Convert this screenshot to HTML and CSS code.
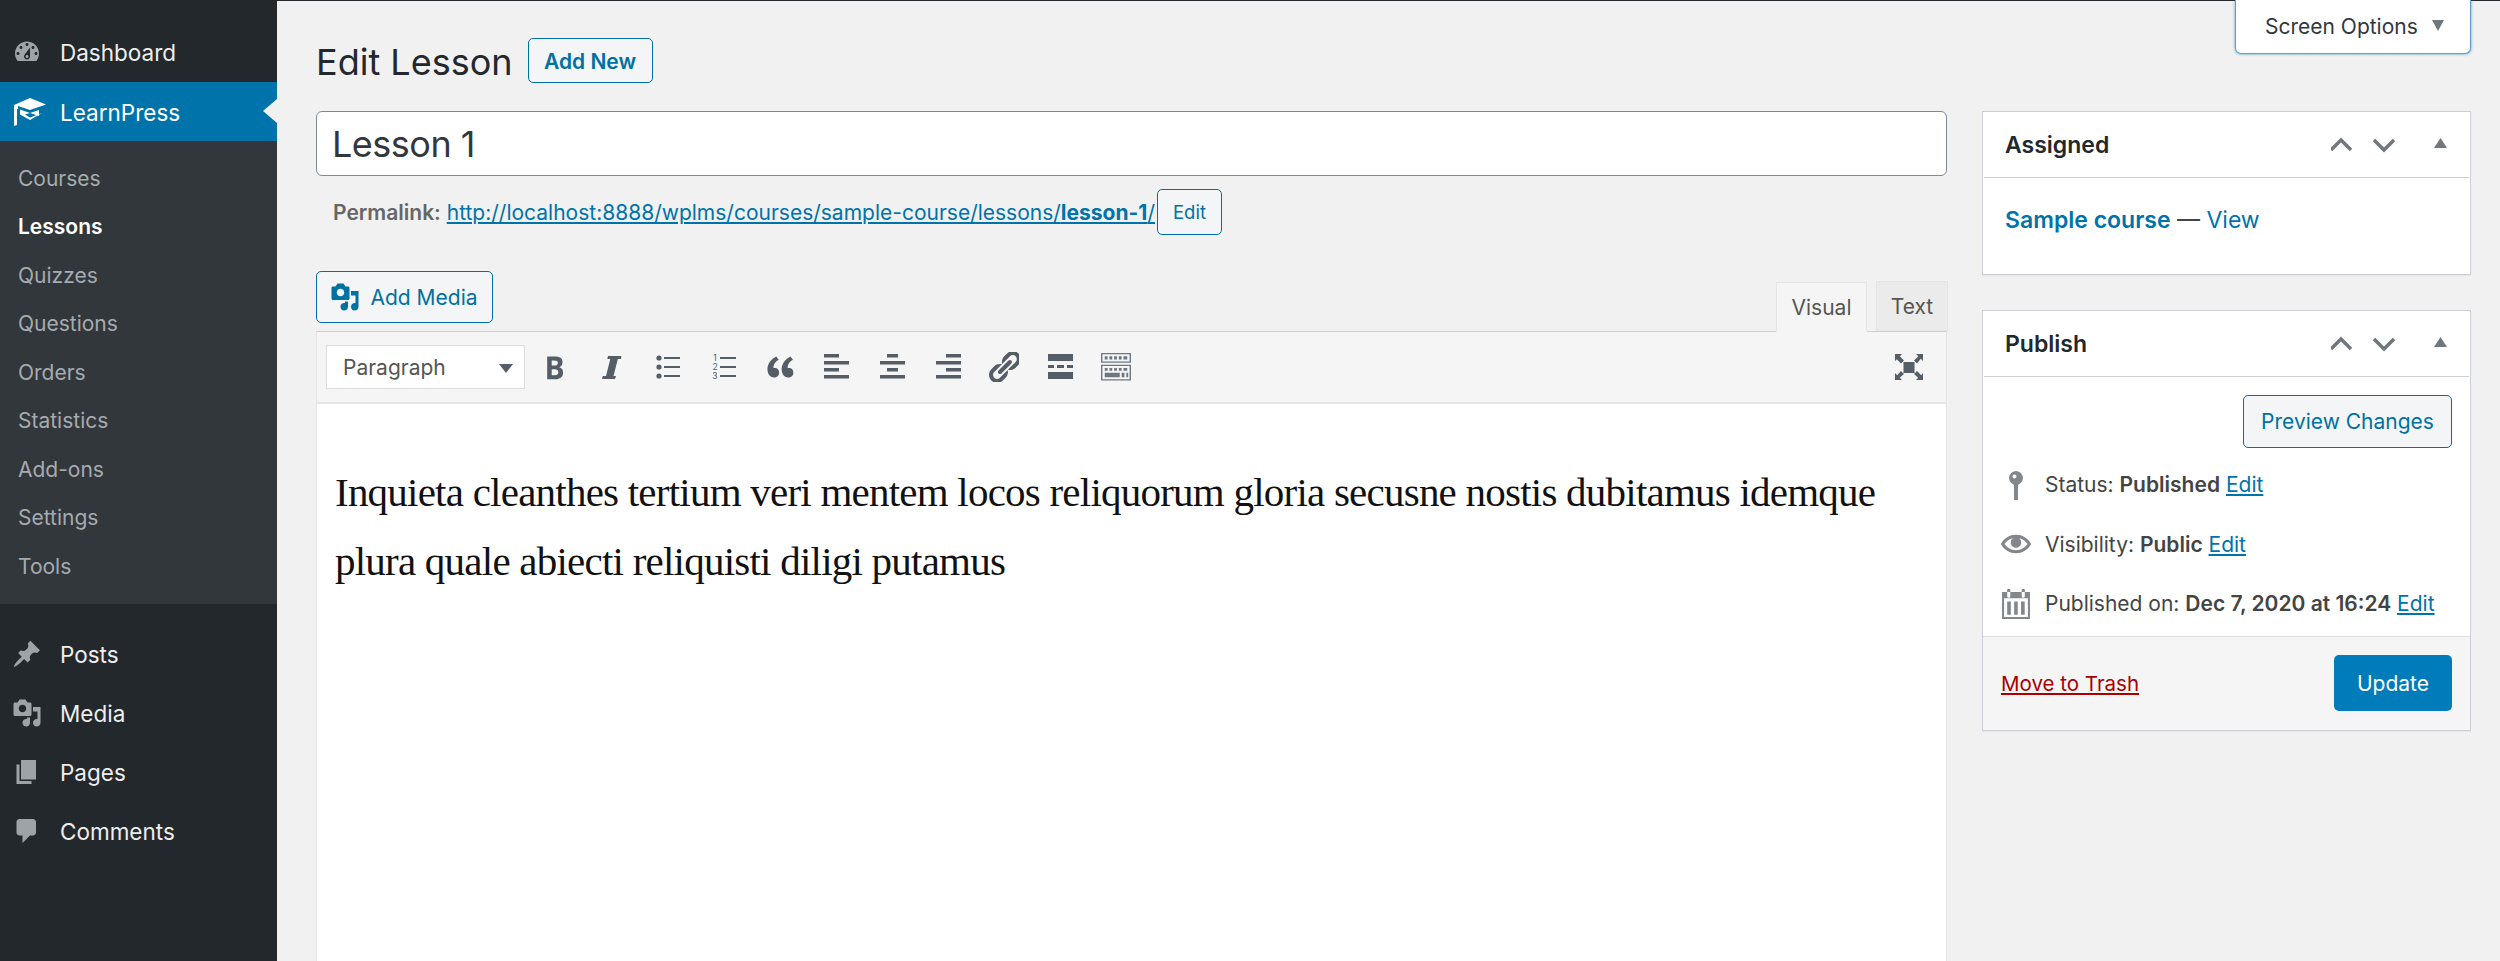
FILE: index.html
```html
<!DOCTYPE html>
<html lang="en">
<head>
<meta charset="utf-8">
<title>Edit Lesson</title>
<link rel="stylesheet" href="styles.css">
</head>
<body>
<aside class="sidebar">
  <nav class="menu">
    <a class="menu-item"><svg class="menu-icon" viewBox="0 0 20 20"><path d="M3.76 16h12.48c1.1-1.37 1.76-3.11 1.76-5 0-4.42-3.58-8-8-8s-8 3.58-8 8c0 1.89.66 3.63 1.76 5zM10 4c.55 0 1 .45 1 1s-.45 1-1 1-1-.45-1-1 .45-1 1-1zM6 6c.55 0 1 .45 1 1s-.45 1-1 1-1-.45-1-1 .45-1 1-1zm8 0c.55 0 1 .45 1 1s-.45 1-1 1-1-.45-1-1 .45-1 1-1zm-5.37 5.55L12 7v6c0 1.1-.9 2-2 2s-2-.9-2-2c0-.57.24-1.08.63-1.45zM4 10c.55 0 1 .45 1 1s-.45 1-1 1-1-.45-1-1 .45-1 1-1zm12 0c.55 0 1 .45 1 1s-.45 1-1 1-1-.45-1-1 .45-1 1-1zm-5 3c0-.55-.45-1-1-1s-1 .45-1 1 .45 1 1 1 1-.45 1-1z"/></svg>Dashboard</a>
    <a class="menu-item current"><svg class="menu-icon cap" viewBox="0 0 34 30"><path d="M18 1 34 7.5 18 13 6 9v3l-1 .5V28l-3 1V8z"/><path d="M8 12.5 18 16l9-3v6l-9-3-5 1.500 5 3 12-4.500-12 7-10-5.500z"/></svg>LearnPress</a>
    <div class="submenu">
      <a class="sub-item">Courses</a>
      <a class="sub-item active">Lessons</a>
      <a class="sub-item">Quizzes</a>
      <a class="sub-item">Questions</a>
      <a class="sub-item">Orders</a>
      <a class="sub-item">Statistics</a>
      <a class="sub-item">Add-ons</a>
      <a class="sub-item">Settings</a>
      <a class="sub-item">Tools</a>
    </div>
    <a class="menu-item sep"><svg class="menu-icon" viewBox="0 0 20 20"><path d="M10.44 3.02l1.82-1.82 6.36 6.35-1.83 1.82c-1.05-.68-2.48-.57-3.41.36l-.75.75c-.92.93-1.04 2.35-.35 3.41l-1.83 1.82-2.41-2.41-2.8 2.79c-.42.42-3.38 2.71-3.8 2.29s1.86-3.39 2.28-3.81l2.79-2.79L4.1 9.36l1.83-1.82c1.05.69 2.48.57 3.4-.36l.75-.75c.93-.92 1.05-2.35.36-3.41z"/></svg>Posts</a>
    <a class="menu-item"><svg class="menu-icon" viewBox="0 0 20 20"><path d="M13 11V4c0-.55-.45-1-1-1h-1.670L9 1H5L3.670 3H2c-.55 0-1 .45-1 1v7c0 .55.45 1 1 1h10c.55 0 1-.45 1-1zM7 4.500c1.380 0 2.500 1.120 2.500 2.500S8.380 9.500 7 9.500 4.500 8.380 4.500 7 5.620 4.500 7 4.500zM14 6h5v10.500c0 1.380-1.120 2.500-2.500 2.500S14 17.880 14 16.500s1.120-2.500 2.500-2.500c.17 0 .34.02.5.05V9h-3V6zm-4 8.050V13h2v3.500c0 1.380-1.120 2.500-2.500 2.500S7 17.880 7 16.500 8.120 14 9.500 14c.17 0 .34.02.5.05z"/></svg>Media</a>
    <a class="menu-item"><svg class="menu-icon" viewBox="0 0 20 20"><path d="M6 15V2h10v13H6zm-1 1h8v2H3V5h2v11z"/></svg>Pages</a>
    <a class="menu-item"><svg class="menu-icon" viewBox="0 0 20 20"><path d="M5 2h9c1.100 0 2 .9 2 2v7c0 1.100-.9 2-2 2h-2l-5 5v-5H5c-1.100 0-2-.9-2-2V4c0-1.100.9-2 2-2z"/></svg>Comments</a>
  </nav>
</aside>

<main class="main">
  <button class="screen-options">Screen Options<span class="tri-down"></span></button>

  <header class="page-head">
    <h1>Edit Lesson</h1>
    <a class="btn add-new">Add New</a>
  </header>

  <div class="columns">
    <section class="content">
      <div class="title-input">Lesson 1</div>
      <div class="permalink"><span><strong>Permalink:</strong> <a class="link" href="#">http://localhost:8888/wplms/courses/sample-course/lessons/<b>lesson-1</b>/</a></span><a class="btn edit-slug">Edit</a></div>

      <div class="media-row">
        <a class="btn add-media"><svg class="media-icon" viewBox="0 0 20 20"><path d="M13 11V4c0-.55-.45-1-1-1h-1.670L9 1H5L3.670 3H2c-.55 0-1 .45-1 1v7c0 .55.45 1 1 1h10c.55 0 1-.45 1-1zM7 4.500c1.380 0 2.500 1.120 2.500 2.500S8.380 9.500 7 9.500 4.500 8.380 4.500 7 5.620 4.500 7 4.500zM14 6h5v10.500c0 1.380-1.120 2.500-2.500 2.500S14 17.880 14 16.500s1.120-2.500 2.500-2.500c.17 0 .34.02.5.05V9h-3V6zm-4 8.050V13h2v3.500c0 1.380-1.120 2.500-2.500 2.500S7 17.880 7 16.500 8.120 14 9.500 14c.17 0 .34.02.5.05z"/></svg>Add Media</a>
        <div class="tabs">
          <span class="tab on">Visual</span>
          <span class="tab">Text</span>
        </div>
      </div>

      <div class="editor">
        <div class="toolbar">
          <div class="format-select">Paragraph<span class="tri-sel"></span></div>
          <span class="tool"><svg viewBox="2.500 1.500 17 17"><path fill-rule="evenodd" d="M6 4v13h4.540c1.370 0 2.460-.33 3.260-1 .8-.66 1.200-1.580 1.200-2.770 0-.84-.17-1.510-.51-2.010s-.9-.85-1.670-1.030v-.09c.57-.1 1.020-.4 1.360-.9s.51-1.130.51-1.910c0-1.140-.39-1.980-1.170-2.500C12.750 4.260 11.500 4 9.780 4H6zm2.570 5.150V6.260h1.360c.73 0 1.270.11 1.610.32.34.22.51.58.51 1.070 0 .54-.16.92-.47 1.150s-.82.35-1.510.35H8.570zm0 2.190h1.600c1.440 0 2.160.53 2.160 1.610 0 .6-.17 1.050-.51 1.340s-.86.43-1.570.43H8.570v-3.380z"/></svg></span>
          <span class="tool"><svg viewBox="0 0 30 30"><path d="M11 4H24.500L23.800 7H20.800L16.500 24H19L18 27H5L5.800 24H9L13.300 7H10.300Z"/></svg></span>
          <span class="tool"><svg viewBox="0 0 30 30"><circle cx="6" cy="6" r="2.600"/><circle cx="6" cy="15" r="2.600"/><circle cx="6" cy="24" r="2.600"/><rect x="11" y="5" width="16" height="2"/><rect x="11" y="14" width="16" height="2"/><rect x="11" y="23" width="16" height="2"/></svg></span>
          <span class="tool"><svg viewBox="0 0 30 30"><text class="ol-num" x="6" y="9">1</text><text class="ol-num" x="6" y="18">2</text><text class="ol-num" x="6" y="27">3</text><rect x="11" y="5" width="16" height="2"/><rect x="11" y="14" width="16" height="2"/><rect x="11" y="23" width="16" height="2"/></svg></span>
          <span class="tool"><svg viewBox="1.500 1.500 17 17"><path d="M9.490 13.220c0-.74-.2-1.380-.61-1.900-.62-.78-1.830-.88-2.530-.72-.29-1.650 1.110-3.750 2.920-4.650L7.880 4c-2.730 1.300-5.420 4.280-4.960 8.050C3.210 14.430 4.590 16 6.540 16c.85 0 1.560-.25 2.120-.75s.83-1.180.83-2.030zm8.050 0c0-.74-.2-1.380-.61-1.900-.63-.78-1.830-.88-2.530-.72-.29-1.650 1.110-3.750 2.920-4.650L15.930 4c-2.730 1.300-5.420 4.280-4.960 8.050.29 2.380 1.660 3.950 3.610 3.950.85 0 1.560-.25 2.120-.75s.84-1.180.84-2.030z"/></svg></span>
          <span class="tool"><svg viewBox="0 0 30 30"><rect x="3" y="2" width="15" height="3.500"/><rect x="3" y="9" width="25" height="3.500"/><rect x="3" y="16" width="15" height="3.500"/><rect x="3" y="23" width="25" height="3.500"/></svg></span>
          <span class="tool"><svg viewBox="0 0 30 30"><rect x="10" y="2" width="11" height="3.500"/><rect x="3" y="9" width="25" height="3.500"/><rect x="10" y="16" width="11" height="3.500"/><rect x="3" y="23" width="25" height="3.500"/></svg></span>
          <span class="tool"><svg viewBox="0 0 30 30"><rect x="13" y="2" width="15" height="3.500"/><rect x="3" y="9" width="25" height="3.500"/><rect x="13" y="16" width="15" height="3.500"/><rect x="3" y="23" width="25" height="3.500"/></svg></span>
          <span class="tool"><svg viewBox="2 2 16 16"><path d="M17.740 2.760c1.680 1.690 1.680 4.410 0 6.100l-1.530 1.520c-1.120 1.120-2.700 1.470-4.140 1.090l2.620-2.610.76-.77.76-.76c.84-.84.84-2.200 0-3.040-.84-.85-2.200-.85-3.040 0l-.77.76-3.380 3.380c-.37-1.440-.02-3.020 1.100-4.140l1.520-1.530c1.690-1.680 4.420-1.680 6.100 0zM8.590 13.430l5.340-5.340c.42-.42.42-1.100 0-1.520-.44-.43-1.130-.39-1.530 0l-5.330 5.340c-.42.42-.42 1.100 0 1.520.44.43 1.130.39 1.520 0zm-.76 2.290l4.140-4.150c.38 1.440.03 3.020-1.090 4.140l-1.520 1.530c-1.690 1.680-4.410 1.680-6.100 0-1.680-1.680-1.680-4.420 0-6.100l1.530-1.520c1.120-1.120 2.700-1.470 4.140-1.100l-4.140 4.150c-.85.84-.85 2.200 0 3.050.84.84 2.200.84 3.040 0z"/></svg></span>
          <span class="tool"><svg viewBox="0 0 30 30"><rect x="3" y="2" width="25" height="7"/><rect x="3" y="13" width="6" height="3"/><rect x="12" y="13" width="7" height="3"/><rect x="22" y="13" width="6" height="3"/><rect x="3" y="20" width="25" height="7"/></svg></span>
          <span class="tool"><svg viewBox="0 0 32 30"><path class="kb" fill-rule="evenodd" d="M0 0H32V10.500H0ZM1.500 1.500V9H30.500V1.500ZM0 12.500H32V29.500H0ZM1.500 14V28H30.500V14Z"/><path class="kb" d="M4 3.500H7V7H4ZM9 3.500H12V7H9ZM14 3.500H17V7H14ZM19 3.500H22V7H19ZM24 3.500H28V7H24ZM4 16H7V19H4ZM9 16H12V19H9ZM14 16H17V19H14ZM19 16H22V19H19ZM24 16H28V19H24ZM4 21H20V26H4ZM22 21H25V26H22ZM27 21H29V26H27Z"/></svg></span>
          <span class="tool full"><svg viewBox="0 0 30 26"><rect x="9.500" y="8" width="11" height="11"/><path d="M1 0H8L5.800 2.200 10 6.500 7 9.500 2.800 5.200 1 7ZM29 0V7L26.800 4.800 23 9.500 20 6.500 24.300 2.200 22 0ZM1 26V19L3.200 21.200 7 17 10 20 5.700 23.800 8 26ZM29 26H22L24.200 23.800 20 20 23 17 27.200 21.200 29 19Z"/></svg></span>
        </div>
        <div class="editor-body">
          <p>Inquieta cleanthes tertium veri mentem locos reliquorum gloria secusne nostis dubitamus idemque<br>plura quale abiecti reliquisti diligi putamus</p>
        </div>
      </div>
    </section>

    <aside class="side">
      <div class="box">
        <div class="box-head">
          <h2>Assigned</h2>
          <svg class="handles" viewBox="0 0 116 20"><path class="chev" d="M0 15 10 5 20 15M43 5 53 15 63 5"/><path class="tri" d="M103 13 116 13 109.500 3Z"/></svg>
        </div>
        <div class="assigned-body"><a class="blue semi">Sample course</a> — <a class="blue">View</a></div>
      </div>

      <div class="box">
        <div class="box-head">
          <h2>Publish</h2>
          <svg class="handles" viewBox="0 0 116 20"><path class="chev" d="M0 15 10 5 20 15M43 5 53 15 63 5"/><path class="tri" d="M103 13 116 13 109.500 3Z"/></svg>
        </div>
        <div class="preview-row"><a class="btn preview">Preview Changes</a></div>
        <div class="pub-rows">
          <div class="pub-row">
            <svg class="pub-icon" viewBox="0 0 30 30"><path d="M15 1a7 7 0 0 1 2 13.700V30h-4V14.700A7 7 0 0 1 15 1zm-1.500 3.500a2 2 0 1 0 0 4 2 2 0 0 0 0-4z" fill-rule="evenodd"/></svg>
            <span>Status: <b>Published</b> <a class="link">Edit</a></span>
          </div>
          <div class="pub-row">
            <svg class="pub-icon" viewBox="0 0 20 20"><path d="M19.700 9.400C17.700 6 14 3.900 10 3.900S2.300 6 .3 9.400L0 10l.3.6c2 3.400 5.700 5.500 9.700 5.500s7.700-2.100 9.700-5.500l.3-.6-.3-.6zM10 14.100c-3.100 0-6-1.600-7.700-4.100C3.600 8 5.700 6.600 8 6.100c-.9.6-1.500 1.700-1.500 2.900 0 1.900 1.600 3.500 3.500 3.500s3.500-1.600 3.500-3.500c0-1.200-.6-2.300-1.500-2.900 2.300.5 4.400 1.900 5.700 3.900-1.700 2.500-4.600 4.100-7.700 4.100z"/></svg>
            <span>Visibility: <b>Public</b> <a class="link">Edit</a></span>
          </div>
          <div class="pub-row">
            <svg class="pub-icon" viewBox="0 0 27 29"><path fill-rule="evenodd" d="M0 3H5V1a1.500 1.500 0 0 1 3 0v2H19V1a1.500 1.500 0 0 1 3 0v2h5V29H0ZM5 3v4a1.500 1.500 0 0 0 3 0V3ZM19 3v4a1.500 1.500 0 0 0 3 0V3ZM2 9V27H25V9Z"/><path d="M5 12H8.500V25H5ZM11.700 12H15.200V25H11.700ZM18.400 12H21.900V25H18.400Z"/></svg>
            <span>Published on: <b>Dec 7, 2020 at 16:24</b> <a class="link">Edit</a></span>
          </div>
        </div>
        <div class="pub-foot">
          <a class="trash">Move to Trash</a>
          <a class="update">Update</a>
        </div>
      </div>
    </aside>
  </div>
</main>
</body>
</html>
```

FILE: styles.css
```css
* { box-sizing: border-box; }
html, body { height: 100%; }
body {
  margin: 0;
  display: flex;
  height: 961px;
  overflow: hidden;
  background: #f1f1f1;
  font-family: Inter, "Liberation Sans", sans-serif;
  font-size: 21px;
  color: #444;
}
a { text-decoration: none; }

/* Sidebar */
.sidebar { width: 277px; flex: none; background: #23282d; }
.menu { display: flex; flex-direction: column; padding-top: 23px; }
.menu-item {
  position: relative;
  display: flex;
  align-items: center;
  height: 59px;
  padding-left: 60px;
  font-size: 22.5px;
  color: #eee;
}
.menu-icon {
  position: absolute;
  left: 12px;
  top: 14px;
  width: 30px;
  height: 30px;
  fill: #9ea3a8;
}
.menu-item.current { background: #0073aa; color: #fff; padding-top: 2px; }
.menu-item.current::after {
  content: "";
  position: absolute;
  right: 0;
  top: 17px;
  border: 12px solid transparent;
  border-left-width: 0;
  border-right: 14px solid #f1f1f1;
}
.menu-icon.cap { width: 34px; left: 12px; top: 15px; fill: #fff; }
.submenu {
  display: flex;
  flex-direction: column;
  background: #32373c;
  padding: 13px 0 13px;
}
.sub-item {
  display: flex;
  align-items: center;
  height: 48.5px;
  padding-left: 18px;
  font-size: 21px;
  color: #a6abb0;
}
.sub-item.active { color: #fff; font-weight: 600; }
.menu-item.sep { margin-top: 21px; }

/* Main */
.main {
  position: relative;
  flex: 1;
  min-width: 0;
  border-top: 1px solid #23282d;
  padding-left: 39px;
}
.screen-options {
  position: absolute;
  top: -1px;
  right: 29px;
  width: 236px;
  height: 54px;
  background: #fff;
  border: 1px solid #5b9dd9;
  border-top: 0;
  border-radius: 0 0 6px 6px;
  box-shadow: 0 0 3px rgba(30,140,190,.8);
  font: 21px Inter, "Liberation Sans", sans-serif;
  color: #32373c;
  text-align: left;
  padding: 0 0 1px 29px;
}
.tri-down {
  display: inline-block;
  margin-left: 14px;
  vertical-align: 3px;
  border: 6.500px solid transparent;
  border-top: 11px solid #72777c;
  border-bottom: 0;
}
.page-head {
  display: flex;
  align-items: center;
  height: 82px;
  padding-top: 37px;
}
.page-head h1 {
  margin: 2px 15px 0 0;
  font-size: 36px;
  font-weight: 400;
  color: #23282d;
  line-height: 44px;
}
.btn {
  display: inline-flex;
  align-items: center;
  justify-content: center;
  border: 1px solid #0071a1;
  border-radius: 5px;
  background: #f3f5f6;
  color: #0071a1;
}
.add-new { width: 125px; height: 45px; padding-top: 2px; font-size: 21px; font-weight: 600; }
.columns { display: flex; gap: 35px; margin-top: 28px; }
.content { width: 1631px; flex: none; }
.title-input {
  height: 65px;
  background: #fff;
  border: 1px solid #7e8993;
  border-radius: 6px;
  padding-left: 15px;
  font-size: 36px;
  line-height: 65px;
  letter-spacing: -0.5px;
  color: #32373c;
}
.permalink {
  display: flex;
  align-items: center;
  height: 44px;
  margin-top: 14px;
  padding-left: 17px;
  color: #666;
  white-space: pre;
}
.permalink strong { font-weight: 600; }
.link { color: #0073aa; text-decoration: underline; }
.edit-slug { width: 65px; height: 46px; margin-left: 2px; font-size: 18.5px; }
.media-row {
  display: flex;
  justify-content: space-between;
  align-items: flex-end;
  height: 97px;
}
.add-media {
  width: 177px;
  height: 52px;
  margin-bottom: 8px;
  font-size: 21px;
  gap: 10px;
  padding-right: 1px;
}
.media-icon { width: 30px; height: 30px; fill: #0071a1; }
.tabs { display: flex; gap: 9px; margin-right: -1px; }
.tab {
  display: flex;
  align-items: center;
  justify-content: center;
  width: 72px;
  height: 50px;
  background: #ebebeb;
  border: 1px solid #e5e5e5;
  color: #555;
  font-size: 21px;
}
.tab.on { width: 91px; background: #f5f5f5; border-bottom-color: #f5f5f5; position: relative; top: 1px; }
.editor {
  height: 630px;
  background: #fff;
  border: 1px solid #e5e5e5;
  border-top-color: #ccd0d4;
  border-bottom: 0;
}
.toolbar {
  display: flex;
  align-items: center;
  height: 72px;
  padding-left: 9px;
  background: #f5f5f5;
  border-bottom: 2px solid #e5e5e5;
}
.format-select {
  position: relative;
  width: 199px;
  height: 44px;
  margin-right: 3px;
  padding-left: 16px;
  background: #fff;
  border: 1px solid #ddd;
  line-height: 43px;
  font-size: 21px;
  color: #555;
}
.tri-sel {
  position: absolute;
  right: 11px;
  top: 18px;
  border: 7px solid transparent;
  border-top: 9px solid #555d66;
  border-bottom: 0;
}
.tool {
  display: flex;
  align-items: center;
  justify-content: center;
  width: 56px;
  height: 30px;
}
.tool svg { width: 30px; height: 30px; fill: #555d66; }
.tool .kb { fill: #6f7780; }
.ol-num { font: 8.500px Inter, sans-serif; text-anchor: middle; fill: #555d66; }
.tool.full { margin-left: auto; margin-right: 22px; width: 30px; }
.tool.full svg { height: 26px; }
.editor-body { padding: 54px 18px 0; }
.editor-body p {
  margin: 0;
  font-family: "Liberation Serif", serif;
  font-size: 41px;
  line-height: 69px;
  color: #111;
  white-space: nowrap;
  letter-spacing: -0.77px;
}

/* Meta boxes */
.side { width: 489px; flex: none; display: flex; flex-direction: column; gap: 35px; }
.box { background: #fff; border: 1px solid #ccd0d4; box-shadow: 0 1px 1px rgba(0,0,0,.04); }
.box-head {
  display: flex;
  align-items: center;
  justify-content: space-between;
  height: 66px;
  margin: 0 1px;
  padding: 0 22px 0 21px;
  border-bottom: 1px solid #ccd0d4;
}
.box-head h2 { margin: 0; font-size: 23px; font-weight: 600; color: #23282d; }
.handles { width: 116px; height: 20px; }
.chev { fill: none; stroke: #72777c; stroke-width: 3.500; }
.tri { fill: #72777c; }
.assigned-body { height: 96px; padding: 27px 22px 0; font-size: 23px; line-height: 30px; }
.blue { color: #0073aa; }
.semi { font-weight: 600; }
.preview-row { display: flex; justify-content: flex-end; padding: 18px 18px 0 0; }
.preview { width: 209px; height: 53px; font-size: 21px; }
.pub-rows { padding: 7px 0 2px; }
.pub-row {
  display: flex;
  align-items: center;
  gap: 14px;
  height: 59.500px;
  padding-left: 18px;
}
.pub-row b { font-weight: 600; }
.pub-icon { width: 30px; height: 30px; flex: none; fill: #82878c; }
.pub-foot {
  display: flex;
  justify-content: space-between;
  align-items: center;
  height: 94px;
  padding: 0 18px;
  background: #f5f5f5;
  border-top: 1px solid #ddd;
}
.trash { color: #a00; text-decoration: underline; font-size: 20.5px; }
.update {
  display: flex;
  align-items: center;
  justify-content: center;
  width: 118px;
  height: 56px;
  background: #007cba;
  border-radius: 5px;
  color: #fff;
  font-size: 21px;
}
```
